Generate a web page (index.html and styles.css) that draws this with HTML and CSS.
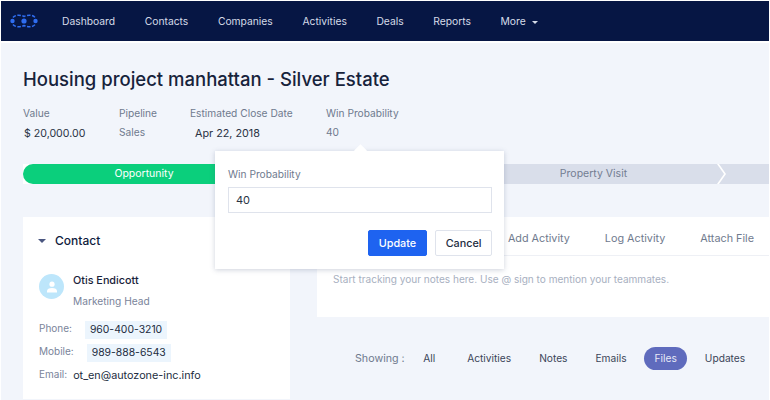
FILE: index.html
```html
<!DOCTYPE html>
<html lang="en">
<head>
  <meta charset="UTF-8" />
  <title>Housing project manhattan - Silver Estate</title>
  <link rel="stylesheet" href="styles.css">
</head>
<body>
  <header class="topbar">
    <svg class="logo" width="28" height="14" viewBox="0 0 28 14" aria-hidden="true">
      <circle cx="2.500" cy="7" r="2.200" fill="#2f6df0"/>
      <circle cx="14" cy="7" r="2.600" fill="#2f6df0"/>
      <circle cx="25.500" cy="7" r="2.200" fill="#2f6df0"/>
      <path d="M3 3.500C5 .8 10 .5 14 2.500C18 .5 23 .8 25 3.500M3 10.500C5 13.200 10 13.500 14 11.500C18 13.500 23 13.200 25 10.500" fill="none" stroke="#2f6df0" stroke-width="1.500" stroke-dasharray="3.500 1.500"/>
    </svg>
    <nav class="menu">
      <a href="#">Dashboard</a>
      <a href="#">Contacts</a>
      <a href="#">Companies</a>
      <a href="#">Activities</a>
      <a href="#">Deals</a>
      <a href="#">Reports</a>
      <a href="#">More <span class="caret"></span></a>
    </nav>
  </header>

  <main class="page">
    <h1>Housing project manhattan - Silver Estate</h1>

    <div class="facts">
      <div class="fact fact-value"><span>Value</span><b>$ 20,000.00</b></div>
      <div class="fact fact-pipeline"><span>Pipeline</span><em>Sales</em></div>
      <div class="fact fact-date"><span>Estimated Close Date</span><b>Apr 22, 2018</b></div>
      <div class="fact"><span>Win Probability</span><em>40</em></div>
    </div>

    <div class="stages">
      <div class="stage stage-done">Opportunity</div>
      <div class="stage stage-next">Property Visit</div>
      <div class="stage stage-last"></div>
    </div>

    <div class="columns">
      <section class="contact">
        <h2><span class="tri"></span>Contact</h2>
        <div class="person">
          <div class="avatar">
            <svg width="12" height="12" viewBox="0 0 12 12" aria-hidden="true"><circle cx="6" cy="3.200" r="2.600" fill="#fff"/><path d="M1 11.500V10c0-2 2-3 5-3s5 1 5 3v1.500z" fill="#fff"/></svg>
          </div>
          <div>
            <div class="name">Otis Endicott</div>
            <div class="role">Marketing Head</div>
          </div>
        </div>
        <div class="line"><label>Phone:</label><span class="chip">960-400-3210</span></div>
        <div class="line"><label>Mobile:</label><span class="chip">989-888-6543</span></div>
        <div class="line"><label>Email:</label><span class="mail">ot_en@autozone-inc.info</span></div>
      </section>

      <div class="activity">
        <section class="composer">
          <div class="tabs">
            <span>Add Activity</span>
            <span>Log Activity</span>
            <span>Attach File</span>
          </div>
          <p class="hint">Start tracking your notes here. Use @ sign to mention your teammates.</p>
        </section>
        <div class="filters">
          <span class="showing">Showing :</span>
          <a href="#" class="all">All</a>
          <a href="#">Activities</a>
          <a href="#">Notes</a>
          <a href="#">Emails</a>
          <a href="#" class="on">Files</a>
          <a href="#">Updates</a>
        </div>
      </div>
    </div>

    <!-- popover over the stage bar -->
    <div class="popover">
      <label for="prob">Win Probability</label>
      <input id="prob" type="text" value="40" />
      <div class="popover-btns">
        <button class="btn btn-blue">Update</button>
        <button class="btn btn-plain">Cancel</button>
      </div>
    </div>
  </main>
</body>
</html>
```

FILE: styles.css
```css
html, body {
  margin: 0;
  padding: 0;
  height: 400px;
  overflow: hidden;
}
body {
  font-family: 'Inter', 'Liberation Sans', sans-serif;
  background: #f2f5fb;
  color: #1c2536;
  border: 1px solid #fff;
  border-bottom: 0;
  box-sizing: border-box;
}
.topbar {
  display: flex;
  align-items: center;
  height: 40px;
  background: #061644;
  padding-left: 9px;
  border-bottom: 2px solid #fff;
}
.logo {
  flex-shrink: 0;
}
.menu {
  display: flex;
  gap: 29.600px;
  margin-left: 24px;
}
.menu a {
  color: #d5dbe8;
  font-size: 10.300px;
  text-decoration: none;
}
.caret {
  display: inline-block;
  margin-left: 3px;
  vertical-align: middle;
  border: 3.500px solid transparent;
  border-top: 3.500px solid #d5dbe8;
  border-bottom: 0;
}
.page {
  position: relative;
  padding: 0 0 0 22px;
}
h1 {
  margin: 0;
  padding-top: 24px;
  font-size: 18.500px;
  line-height: 24px;
  font-weight: 500;
  color: #17233b;
}
.facts {
  display: flex;
  margin-top: 15px;
  font-size: 10.200px;
}
.fact span {
  display: block;
  color: #6f7a8e;
  line-height: 14px;
}
.fact b, .fact em {
  display: block;
  font-style: normal;
  font-weight: 400;
  line-height: 14px;
}
.fact b {
  margin-top: 7px;
  color: #2a3344;
  font-size: 10.600px;
}
.fact em {
  margin-top: 5px;
  color: #6f7a8e;
}
.fact-value {
  width: 96px;
}
.fact-value b {
  padding-left: 1px;
}
.fact-pipeline {
  width: 71px;
}
.fact-date {
  width: 136px;
}
.fact-date b {
  padding-left: 5px;
  font-size: 10.800px;
}
.stages {
  display: flex;
  height: 20px;
  margin-top: 23px;
  font-size: 10.500px;
  line-height: 20px;
  text-align: center;
  background: #fff;
}
.stage-done {
  width: 242px;
  background: #0bcf7c;
  color: #fff;
  border-radius: 10px 0 0 10px;
}
.stage-next {
  flex: 1;
  padding-left: 198px;
  box-sizing: border-box;
  background: #d9deea;
  color: #737d92;
  clip-path: polygon(0 0, calc(100% - 7px) 0, 100% 50%, calc(100% - 7px) 100%, 0 100%);
}
.stage-last {
  width: 50px;
  margin-left: -5px;
  background: #d9deea;
  clip-path: polygon(0 0, 100% 0, 100% 100%, 0 100%, 7px 50%);
}
.columns {
  display: flex;
  margin-top: 33px;
}
.contact {
  width: 267px;
  height: 182px;
  padding: 16px 14px 0 15px;
  background: #fff;
  box-sizing: border-box;
}
h2 {
  display: flex;
  align-items: center;
  margin: 0;
  font-size: 12px;
  line-height: 16px;
  font-weight: 500;
  color: #0f1b3d;
}
.tri {
  width: 0;
  height: 0;
  margin-right: 9px;
  border: 4px solid transparent;
  border-top: 4.500px solid #4a5680;
  border-bottom: 0;
}
.person {
  display: flex;
  gap: 9px;
  margin: 25px 0 10px 1px;
}
.avatar {
  display: flex;
  align-items: center;
  justify-content: center;
  width: 25px;
  height: 25px;
  border-radius: 50%;
  background: #bde6fb;
}
.name {
  font-size: 10.800px;
  font-weight: 500;
  line-height: 14px;
  color: #18223a;
}
.role {
  margin-top: 6px;
  font-size: 10.200px;
  line-height: 14px;
  color: #7a849a;
}
.line {
  display: flex;
  align-items: center;
  margin: 0 0 0 1px;
  height: 23px;
  font-size: 10.800px;
}
.line label {
  font-size: 10px;
  color: #7a849a;
  margin-right: 13px;
  padding-bottom: 3px;
}
.chip {
  padding: 0 5px;
  font-size: 10.400px;
  line-height: 18px;
  background: #ecf5fd;
  color: #222c40;
}
.mail {
  margin-left: -7px;
  color: #222c40;
}
.activity {
  flex: 1;
  margin-left: 27px;
}
.composer {
  height: 100px;
  background: #fff;
}
.tabs {
  display: flex;
  justify-content: flex-end;
  gap: 35px;
  height: 39px;
  padding-right: 15px;
  font-size: 10.800px;
  line-height: 43px;
  color: #6f7a8e;
  border-bottom: 1px solid #eef0f5;
  box-sizing: border-box;
}
.hint {
  margin: 0;
  padding: 16px 0 0 16px;
  font-size: 10.050px;
  line-height: 14px;
  color: #a8b0bf;
}
.filters {
  display: flex;
  align-items: center;
  margin-top: 30px;
  padding-left: 38px;
  font-size: 10.200px;
}
.filters a {
  color: #3a4458;
  text-decoration: none;
  padding: 0 10.500px;
  line-height: 23px;
  margin-right: 7px;
  border-radius: 12px;
}
.filters .all {
  margin-right: 11px;
}
.filters .on {
  background: #5f6bbd;
  color: #e8eaf7;
}
.showing {
  font-size: 10.700px;
  color: #6f7a8e;
  margin-right: 8px;
}
.popover {
  position: absolute;
  top: 108px;
  left: 214px;
  width: 289px;
  height: 118px;
  padding: 16px 12px 0 13px;
  background: #fff;
  box-sizing: border-box;
  box-shadow: 0 1px 5px rgba(60, 75, 110, .25);
}
.popover::before {
  content: "";
  position: absolute;
  top: -5px;
  left: 141px;
  width: 9px;
  height: 9px;
  background: #fff;
  transform: rotate(45deg);
}
.popover label {
  display: block;
  font-size: 10.200px;
  line-height: 14px;
  color: #6f7a8e;
}
.popover input {
  display: block;
  width: 100%;
  height: 26px;
  margin-top: 6px;
  padding: 0 7px;
  font: 11px 'Inter', 'Liberation Sans', sans-serif;
  color: #2a3344;
  border: 1px solid #dfe3ec;
  box-sizing: border-box;
}
.popover-btns {
  display: flex;
  justify-content: flex-end;
  gap: 8px;
  margin-top: 17px;
}
.btn {
  height: 26px;
  padding: 0 10px;
  font: 500 10.800px 'Inter', 'Liberation Sans', sans-serif;
  color: #222c40;
  background: #fff;
  border: 1px solid #dfe3ec;
  border-radius: 2px;
}
.btn-plain {
  padding: 0 9.500px;
}
.btn-blue {
  background: #1e63f0;
  border-color: #1e63f0;
  color: #fff;
}
```
